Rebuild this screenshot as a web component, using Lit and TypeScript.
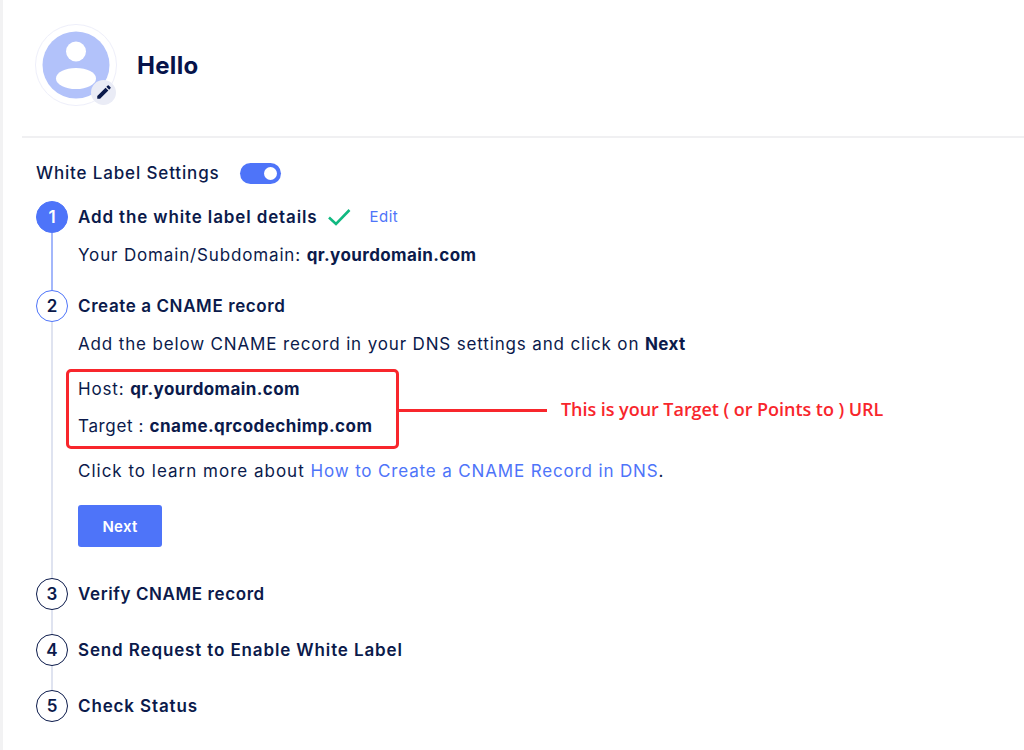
import { LitElement, css, html } from 'lit';
import { customElement } from 'lit/decorators.js';
import { classMap } from 'lit/directives/class-map.js';

const steps = [
  { title: 'Verify CNAME record', tight: true },
  { title: 'Send Request to Enable White Label', tight: false },
  { title: 'Check Status', tight: false },
];

@customElement('app-root')
export class AppRoot extends LitElement {
  static styles = css`
    :host {
      display: block;
      position: relative;
      width: 1024px;
      height: 750px;
      overflow: hidden;
      background: #fff;
      color: #0b1a4b;
      font: 400 17px/24px Inter, 'Noto Sans', sans-serif;
      letter-spacing: 0.85px;
    }

    .page {
      height: 100%;
      border-left: 3px solid #f2f2f3;
      padding-left: 19px;
      box-sizing: border-box;
    }

    header {
      display: flex;
      align-items: center;
      gap: 20px;
      height: 138px;
      padding: 0 0 6px 13px;
      box-sizing: border-box;
      border-bottom: 2px solid #f0f0f2;
    }

    .avatar {
      position: relative;
      flex: none;
      width: 82px;
      height: 82px;
      display: block;
    }

    .pen {
      position: absolute;
      right: 1px;
      bottom: 1px;
      width: 25px;
      height: 25px;
      border-radius: 50%;
      background: #eaecf6;
      display: flex;
      align-items: center;
      justify-content: center;
    }

    h1 {
      margin: 2px 0 0;
      font: 700 24px/28px Inter, sans-serif;
      letter-spacing: 0.3px;
      color: #06134a;
    }

    .settings {
      display: flex;
      align-items: center;
      gap: 20px;
      margin: 23px 0 0 14px;
      height: 24px;
      font-weight: 500;
    }

    .toggle {
      width: 41px;
      height: 21px;
      border-radius: 11px;
      background: #4e74f9;
      display: flex;
      align-items: center;
      justify-content: flex-end;
      padding-right: 4px;
      box-sizing: border-box;
    }

    .toggle span {
      width: 13px;
      height: 13px;
      border-radius: 50%;
      background: #fff;
    }

    .steps {
      margin: 16px 0 0 14px;
    }

    .step {
      display: grid;
      grid-template-columns: 32px 1fr;
      column-gap: 10px;
    }

    .rail {
      display: flex;
      flex-direction: column;
      align-items: center;
    }

    .num {
      flex: none;
      width: 32px;
      height: 32px;
      box-sizing: border-box;
      border-radius: 50%;
      border: 1px solid #0b1a4b;
      display: flex;
      align-items: center;
      justify-content: center;
      font-weight: 600;
      font-size: 17px;
      letter-spacing: 0;
    }

    .num.done {
      background: #4e74f9;
      border-color: #4e74f9;
      color: #fff;
    }

    .num.active {
      border-color: #4e74f9;
    }

    .line {
      flex: 1;
      width: 2px;
      background: #dfe3f0;
    }

    .line.blue {
      background: #a3b7fb;
    }

    .title {
      display: flex;
      align-items: center;
      height: 32px;
      font-weight: 600;
      letter-spacing: 0.87px;
    }

    .title.tight {
      letter-spacing: 0.6px;
    }

    .title svg {
      margin-left: 9px;
    }

    .edit {
      margin-left: 19px;
      color: #4e74f9;
      font-size: 15px;
      font-weight: 400;
      letter-spacing: 0.45px;
    }

    .body {
      margin: 0;
    }

    b {
      font-weight: 700;
      letter-spacing: 0.4px;
      color: #0b1a4b;
    }

    .one {
      height: 89px;
    }

    .one .body {
      margin-top: 10px;
    }

    .two {
      height: 288px;
    }

    .two .body.first {
      margin-top: 10px;
    }

    .record {
      width: 333px;
      height: 80px;
      box-sizing: border-box;
      margin: 13px 0 0 -12px;
      padding: 0 0 4px 9px;
      border: 3px solid #f8262c;
      border-radius: 5px;
      display: flex;
      flex-direction: column;
      justify-content: center;
      gap: 13px;
    }

    .record p {
      margin: 0;
    }

    .record .target {
      letter-spacing: 0.65px;
    }

    .record .target b {
      letter-spacing: 0.45px;
    }

    .learn {
      margin-top: 10px;
      letter-spacing: 1px;
    }

    a {
      color: #4e74f9;
      text-decoration: none;
      letter-spacing: 0.85px;
    }

    button {
      display: block;
      margin-top: 22px;
      width: 84px;
      height: 42px;
      padding: 2px 0 0;
      border: 0;
      border-radius: 3px;
      background: #4e74f9;
      color: #fff;
      font: 600 15px/20px Inter, sans-serif;
      letter-spacing: 0.3px;
    }

    .rest {
      height: 56px;
    }

    .rest:last-child {
      height: 32px;
    }

    .note {
      position: absolute;
      left: 399px;
      top: 396px;
      display: flex;
      align-items: center;
      gap: 14px;
      height: 28px;
      color: #f8262c;
      font: 600 18px/28px 'Open Sans', sans-serif;
      letter-spacing: -0.05px;
    }

    .note span {
      margin-top: -2px;
    }

    .note i {
      display: block;
      width: 148px;
      height: 3px;
      background: #f8262c;
    }
  `;

  render() {
    return html`
      <div class="page">
        <header>
          <div class="avatar">
            <svg width="82" height="82" viewBox="0 0 82 82" aria-hidden="true">
              <circle cx="41" cy="41" r="40.5" fill="#fff" stroke="#eeeffa" />
              <circle cx="41" cy="41" r="33.5" fill="#b2c2fa" />
              <circle cx="41" cy="27.5" r="10" fill="#fff" />
              <ellipse cx="41" cy="54.5" rx="20" ry="10.5" fill="#fff" />
            </svg>
            <span class="pen">
              <svg width="18" height="18" viewBox="0 1.3 24 24" aria-hidden="true">
                <path fill="#0b1a4b" d="M3 17.25V21h3.75L17.81 9.94l-3.75-3.75L3 17.25zM20.71 7.04a1 1 0 0 0 0-1.41l-2.34-2.34a1 1 0 0 0-1.41 0l-1.83 1.83 3.75 3.75 1.83-1.83z" />
              </svg>
            </span>
          </div>
          <h1>Hello</h1>
        </header>

        <div class="settings">
          White Label Settings
          <span class="toggle"><span></span></span>
        </div>

        <div class="steps">
          <div class="step one">
            <div class="rail"><span class="num done">1</span><span class="line blue"></span></div>
            <div>
              <div class="title">
                Add the white label details
                <svg width="24" height="18" viewBox="0 0 24 18" aria-hidden="true">
                  <path d="M2 9.5 9 16 22.5 2" fill="none" stroke="#11b981" stroke-width="2.6" />
                </svg>
                <span class="edit">Edit</span>
              </div>
              <p class="body">Your Domain/Subdomain: <b>qr.yourdomain.com</b></p>
            </div>
          </div>

          <div class="step two">
            <div class="rail"><span class="num active">2</span><span class="line"></span></div>
            <div>
              <div class="title tight">Create a CNAME record</div>
              <p class="body first">Add the below CNAME record in your DNS settings and click on <b>Next</b></p>
              <div class="record">
                <p>Host: <b>qr.yourdomain.com</b></p>
                <p class="target">Target : <b>cname.qrcodechimp.com</b></p>
              </div>
              <p class="body learn">Click to learn more about <a href="#">How to Create a CNAME Record in DNS</a>.</p>
              <button>Next</button>
            </div>
          </div>

          ${steps.map(
            (step, i) => html`
              <div class="step rest">
                <div class="rail">
                  <span class="num">${i + 3}</span>
                  ${i < steps.length - 1 ? html`<span class="line"></span>` : ''}
                </div>
                <div class=${classMap({ title: true, tight: step.tight })}>${step.title}</div>
              </div>
            `
          )}
        </div>
      </div>

      <div class="note"><i></i><span>This is your Target ( or Points to ) URL</span></div>
    `;
  }
}
